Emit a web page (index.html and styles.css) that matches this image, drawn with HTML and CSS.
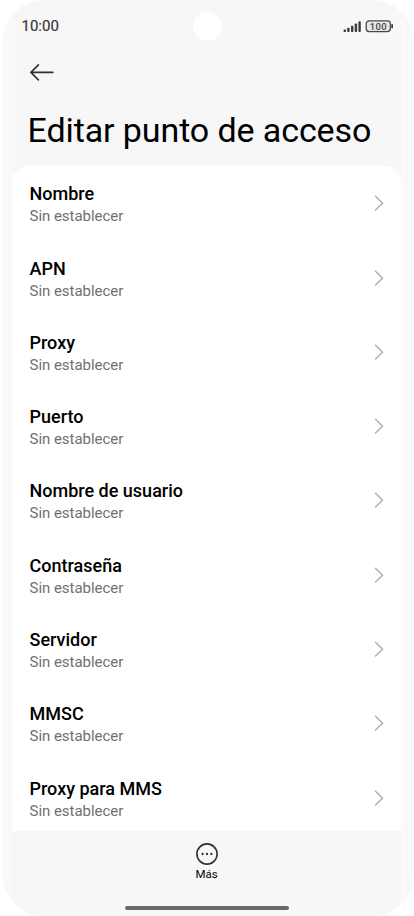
FILE: index.html
```html
<!DOCTYPE html>
<html lang="es">
<head>
<meta charset="utf-8">
<title>Editar punto de acceso</title>
<link rel="stylesheet" href="styles.css">
</head>
<body>
<div class="phone">
  <div class="screen">
    <header class="status">
      <span class="time">10:00</span>
      <span class="camera"></span>
      <svg class="indicators" width="52" height="14" viewBox="0 0 52 14">
        <g fill="#3c3c3c">
          <rect x="0.5" y="9.5" width="2.6" height="2.5" rx="1"/>
          <rect x="4.2" y="7.8" width="2.4" height="4.2" rx=".8"/>
          <rect x="8" y="5.7" width="2.4" height="6.3" rx=".8"/>
          <rect x="11.7" y="3.4" width="2.4" height="8.6" rx=".8"/>
          <rect x="15.4" y="1.2" width="2.4" height="10.8" rx=".8"/>
          <rect x="48.3" y="4" width="1.7" height="4.4" rx=".8"/>
        </g>
        <rect x="23.2" y="0.8" width="24.2" height="10.8" rx="3" fill="#e6e6e6" stroke="#484848" stroke-width="1.3"/>
        <text class="level" x="35.3" y="9.5" text-anchor="middle">100</text>
      </svg>
    </header>
    <svg class="back" width="26" height="20" viewBox="0 0 26 20" fill="none" stroke="#303030" stroke-width="1.6" stroke-linecap="round" stroke-linejoin="round"><path d="M23.9 10.4H2.2M9.4 2.9L1.9 10.4L9.4 17.9"/></svg>
    <h1>Editar punto de acceso</h1>
    <main class="list">
      <div class="row"><div><h2>Nombre</h2><p>Sin establecer</p></div><svg class="chev" width="10" height="16" viewBox="0 0 10 16"><path d="M1.5 1.3L8.6 8.2L1.5 15"/></svg></div>
      <div class="row"><div><h2>APN</h2><p>Sin establecer</p></div><svg class="chev" width="10" height="16" viewBox="0 0 10 16"><path d="M1.5 1.3L8.6 8.2L1.5 15"/></svg></div>
      <div class="row"><div><h2>Proxy</h2><p>Sin establecer</p></div><svg class="chev" width="10" height="16" viewBox="0 0 10 16"><path d="M1.5 1.3L8.6 8.2L1.5 15"/></svg></div>
      <div class="row"><div><h2>Puerto</h2><p>Sin establecer</p></div><svg class="chev" width="10" height="16" viewBox="0 0 10 16"><path d="M1.5 1.3L8.6 8.2L1.5 15"/></svg></div>
      <div class="row"><div><h2>Nombre de usuario</h2><p>Sin establecer</p></div><svg class="chev" width="10" height="16" viewBox="0 0 10 16"><path d="M1.5 1.3L8.6 8.2L1.5 15"/></svg></div>
      <div class="row"><div><h2>Contraseña</h2><p>Sin establecer</p></div><svg class="chev" width="10" height="16" viewBox="0 0 10 16"><path d="M1.5 1.3L8.6 8.2L1.5 15"/></svg></div>
      <div class="row"><div><h2>Servidor</h2><p>Sin establecer</p></div><svg class="chev" width="10" height="16" viewBox="0 0 10 16"><path d="M1.5 1.3L8.6 8.2L1.5 15"/></svg></div>
      <div class="row"><div><h2>MMSC</h2><p>Sin establecer</p></div><svg class="chev" width="10" height="16" viewBox="0 0 10 16"><path d="M1.5 1.3L8.6 8.2L1.5 15"/></svg></div>
      <div class="row"><div><h2>Proxy para MMS</h2><p>Sin establecer</p></div><svg class="chev" width="10" height="16" viewBox="0 0 10 16"><path d="M1.5 1.3L8.6 8.2L1.5 15"/></svg></div>
    </main>
    <footer class="toolbar">
      <svg width="24" height="24" viewBox="0 0 24 24"><circle cx="12" cy="12" r="10.1" fill="none" stroke="#303030" stroke-width="1.6"/><g fill="#303030"><circle cx="7.6" cy="12" r="1.15"/><circle cx="12" cy="12" r="1.15"/><circle cx="16.4" cy="12" r="1.15"/></g></svg>
      <span>Más</span>
      <i class="home"></i>
    </footer>
  </div>
</div>
</body>
</html>
```
FILE: styles.css
```css
* { box-sizing: border-box; }
body { margin: 0; background: #fff; font-family: Roboto, sans-serif; color: #000; }
.phone {
  width: 412px;
  height: 916px;
  margin-left: 2px;
  padding: 0 13px 0 10px;
  border-radius: 42px;
  overflow: hidden;
  background: linear-gradient(90deg, #f9f9f9 0 10px, #f7f7f7 13px 388px, #f8f8f8 399px, #fcfcfc 401px, #f8f8f8 404px, #fafafa);
}
.screen { height: 916px; display: flex; flex-direction: column; }
.status {
  height: 52px;
  display: grid;
  grid-template-columns: 181px 29px 1fr;
  align-items: center;
  flex: none;
}
.time { padding: 0 0 0 9.5px; font-size: 15px; line-height: 18px; font-weight: 400; color: #383838; -webkit-text-stroke: .2px #383838; }
.camera { width: 29px; height: 29px; border-radius: 50%; background: #fff; }
.indicators { justify-self: end; margin: 2px 6px 0 0; }
.level { font: 500 9.5px Roboto, sans-serif; fill: #484848; letter-spacing: .3px; }
.back { margin: 10px 0 0 17px; flex: none; }
h1 { margin: 27px 0 0 15.5px; height: 57px; font-size: 34px; line-height: 42px; font-weight: 400; letter-spacing: -.1px; white-space: nowrap; flex: none; }
.list { height: 665px; flex: none; background: #fff; border-radius: 16px 16px 0 0; overflow: hidden; }
.row { height: 74.3px; display: flex; justify-content: space-between; padding: 17.3px 17px 0 17.5px; }
h2 { margin: 0; font-size: 18px; line-height: 22px; font-weight: 500; letter-spacing: 0; }
p { margin: 0; font-size: 15px; line-height: 22px; letter-spacing: -.03px; color: #707070; }
.chev { margin-top: 12px; fill: none; stroke: #b0b0b0; stroke-width: 1.5; stroke-linecap: round; stroke-linejoin: round; }
.toolbar { flex: 1; display: flex; flex-direction: column; align-items: center; padding-top: 11px; background: #f7f7f7; }
.toolbar span { font-size: 11.5px; line-height: 16px; }
.home { width: 164px; height: 4px; margin-top: 23.5px; border-radius: 2px; background: #696969; }
```
